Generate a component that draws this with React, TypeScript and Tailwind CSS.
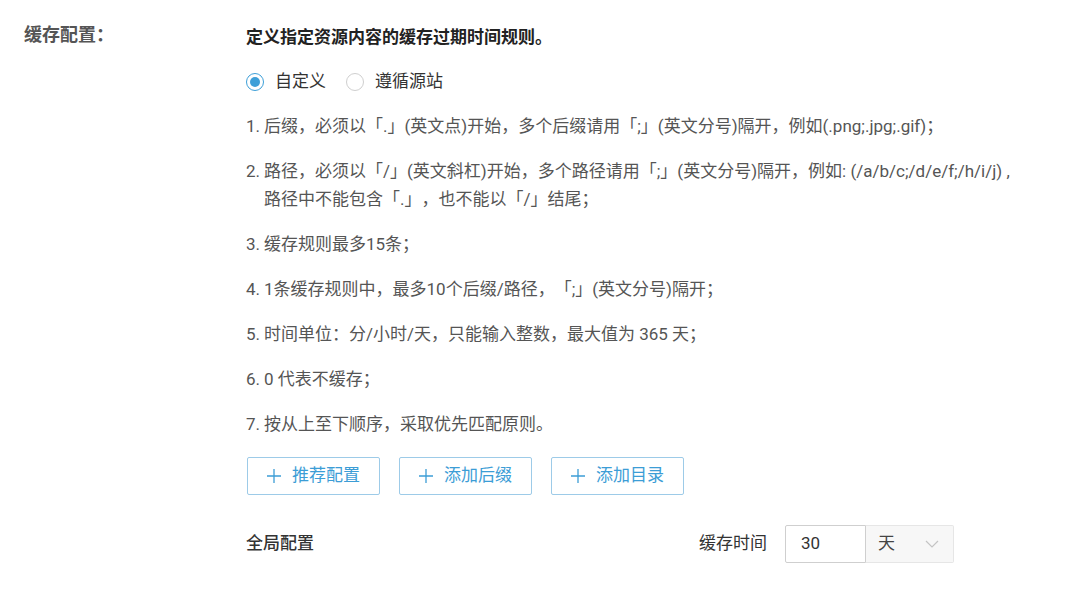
import React from "react";

const font = { fontFamily: "Roboto, 'Noto Sans CJK SC', sans-serif" };

function Radio({ checked, label }: { checked?: boolean; label: string }) {
  return (
    <div className="flex items-center">
      <span
        className={
          checked
            ? "w-[18px] h-[18px] rounded-full border border-[#3d9fd8] flex items-center justify-center"
            : "w-[18px] h-[18px] rounded-full border border-[#cfcfcf] flex items-center justify-center"
        }
      >
        {checked && <span className="w-[10px] h-[10px] rounded-full bg-[#3d9fd8]" />}
      </span>
      <span className="ml-[11px] text-[17px] text-[#333]">{label}</span>
    </div>
  );
}

function Item({ n, children }: { n: string; children: React.ReactNode }) {
  return (
    <div className="flex text-[17px] leading-[28px] text-[#555]">
      <span className="w-[18px] shrink-0">{n}</span>
      <span>{children}</span>
    </div>
  );
}

function Btn({ label }: { label: string }) {
  return (
    <button className="w-[133px] h-[38px] border border-[#9dcbe8] rounded-[2px] bg-white text-[#3c9dd6] text-[17px] flex items-center justify-center">
      <svg width="14" height="14" viewBox="0 0 14 14" className="mr-[11px]">
        <path d="M7 0v14M0 7h14" stroke="#3c9dd6" strokeWidth="1.3" />
      </svg>
      <span>{label}</span>
    </button>
  );
}

export default function App() {
  return (
    <div className="w-[1080px] h-[598px] bg-white flex [text-spacing-trim:space-all]" style={font}>
      <div className="w-[246px] shrink-0 pl-[24px] pt-[23px]">
        <span className="text-[18px] leading-[24px] font-bold text-[#555]">缓存配置：</span>
      </div>
      <div className="flex-1 pt-[25px]">
        <div className="text-[17px] leading-[24px] font-semibold text-[#222]">
          定义指定资源内容的缓存过期时间规则。
        </div>
        <div className="mt-[19px] h-[28px] flex items-center gap-[20px]">
          <Radio checked label="自定义" />
          <Radio label="遵循源站" />
        </div>
        <div className="mt-[16px] flex flex-col gap-[17px]">
          <Item n="1.">后缀，必须以「.」(英文点)开始，多个后缀请用「;」(英文分号)隔开，例如(.png;.jpg;.gif)；</Item>
          <Item n="2.">
            路径，必须以「/」(英文斜杠)开始，多个路径请用「;」(英文分号)隔开，例如: (/a/b/c;/d/e/f;/h/i/j) ,
            <br />
            路径中不能包含「.」，也不能以「/」结尾；
          </Item>
          <Item n="3.">缓存规则最多15条；</Item>
          <Item n="4.">1条缓存规则中，最多10个后缀/路径，「;」(英文分号)隔开；</Item>
          <Item n="5.">时间单位：分/小时/天，只能输入整数，最大值为 365 天；</Item>
          <Item n="6.">0 代表不缓存；</Item>
          <Item n="7.">按从上至下顺序，采取优先匹配原则。</Item>
        </div>
        <div className="mt-[19px] flex gap-[19px] pl-[1px]">
          <Btn label="推荐配置" />
          <Btn label="添加后缀" />
          <Btn label="添加目录" />
        </div>
        <div className="mt-[30px] w-[708px] flex items-center justify-between">
          <span className="text-[17px] font-medium text-[#333]">全局配置</span>
          <div className="flex items-center">
            <span className="text-[17px] text-[#333] mr-[18px]">缓存时间</span>
            <div className="w-[81px] h-[38px] border border-[#cfcfcf] rounded-l-[2px] flex items-center pl-[15px] text-[17px] text-[#333]">
              30
            </div>
            <div className="w-[88px] h-[38px] border border-l-0 border-[#e6e6e6] bg-[#f7f7f7] rounded-r-[2px] flex items-center justify-between pl-[12px] pr-[14px]">
              <span className="text-[17px] text-[#444]">天</span>
              <svg width="14" height="8" viewBox="0 0 14 8" fill="none">
                <path d="M1 1l6 6 6-6" stroke="#c4c4c4" strokeWidth="1.2" />
              </svg>
            </div>
          </div>
        </div>
      </div>
    </div>
  );
}
